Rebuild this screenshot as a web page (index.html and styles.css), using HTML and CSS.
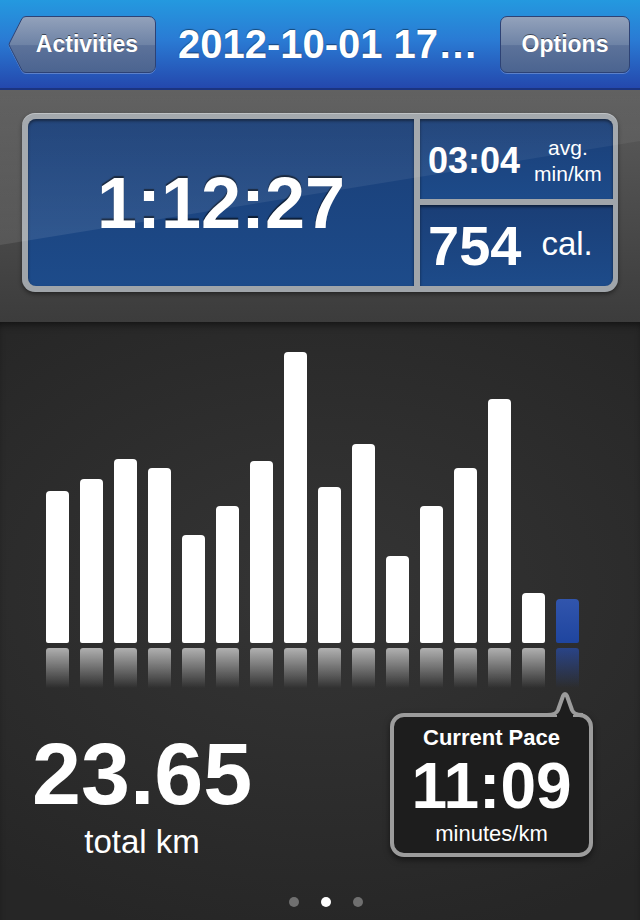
FILE: index.html
```html
<!DOCTYPE html>
<html lang="en">
<head>
    <meta charset="UTF-8">
    <meta name="viewport" content="width=device-width, initial-scale=1.0">
    <title>2012-10-01 17:00 - Activity</title>
    <link rel="stylesheet" href="styles.css">
</head>
<body>
    <header class="navbar">
        <a class="nav-btn back-btn" href="#">
            <svg class="back-shape" width="148" height="57" viewBox="0 0 148 57">
                <defs>
                    <linearGradient id="btnGrad" x1="0" y1="0" x2="0" y2="1">
                        <stop offset="0" stop-color="#93a2bb"/>
                        <stop offset="0.5" stop-color="#6e83a6"/>
                        <stop offset="0.52" stop-color="#5c729a"/>
                        <stop offset="1" stop-color="#4b6490"/>
                    </linearGradient>
                </defs>
                <path d="M18,0.5 H141 A6.5,6.5 0 0 1 147.5,7 V50 A6.5,6.5 0 0 1 141,56.5 H18 Q15.5,56.5 14,54.5 L1.5,30 Q0.8,28.5 1.5,27 L14,2.5 Q15.5,0.5 18,0.5 Z" fill="url(#btnGrad)" stroke="#2d4275" stroke-width="1"/>
            </svg>
            <span class="btn-label">Activities</span>
        </a>
        <h1 class="nav-title">2012-10-01 17…</h1>
        <a class="nav-btn options-btn" href="#">Options</a>
    </header>

    <section class="summary">
        <div class="stats-box">
            <div class="stat stat-time">1:12:27</div>
            <div class="stat stat-pace">
                <span class="pace-value">03:04</span>
                <span class="pace-unit">avg.<br>min/km</span>
            </div>
            <div class="stat stat-cal">
                <span class="cal-value">754</span>
                <span class="cal-unit">cal.</span>
            </div>
        </div>
    </section>

    <main class="splits">
        <div class="chart">
            <div class="bar" style="height: 152px"></div>
            <div class="bar" style="height: 164px"></div>
            <div class="bar" style="height: 184px"></div>
            <div class="bar" style="height: 175px"></div>
            <div class="bar" style="height: 108px"></div>
            <div class="bar" style="height: 137px"></div>
            <div class="bar" style="height: 182px"></div>
            <div class="bar" style="height: 291px"></div>
            <div class="bar" style="height: 156px"></div>
            <div class="bar" style="height: 199px"></div>
            <div class="bar" style="height: 87px"></div>
            <div class="bar" style="height: 137px"></div>
            <div class="bar" style="height: 175px"></div>
            <div class="bar" style="height: 244px"></div>
            <div class="bar" style="height: 50px"></div>
            <div class="bar bar-current" style="height: 44px"></div>
        </div>
        <div class="reflection">
            <span></span><span></span><span></span><span></span>
            <span></span><span></span><span></span><span></span>
            <span></span><span></span><span></span><span></span>
            <span></span><span></span><span></span>
            <span class="current"></span>
        </div>

        <div class="totals">
            <div class="distance">
                <div class="distance-value">23.65</div>
                <div class="distance-label">total km</div>
            </div>
            <div class="pace-bubble">
                <svg class="bubble-tail" width="40" height="30" viewBox="0 0 40 30">
                    <rect x="10" y="24" width="16" height="6" fill="#1d1d1d"/>
                    <path d="M0,25 C7,25 9.5,23.5 11,20 L16,6 Q18,2 20,6 L25,20 C26.5,23.5 29,25 36,25" fill="#1d1d1d" stroke="#9c9c9c" stroke-width="4" stroke-linejoin="round"/>
                </svg>
                <div class="bubble-title">Current Pace</div>
                <div class="bubble-value">11:09</div>
                <div class="bubble-unit">minutes/km</div>
            </div>
        </div>

        <div class="pager">
            <span class="dot"></span>
            <span class="dot active"></span>
            <span class="dot"></span>
        </div>
    </main>
</body>
</html>
```

FILE: styles.css
```css
body {
    margin: 0;
    width: 640px;
    height: 920px;
    overflow: hidden;
    background-color: #2b2b2b;
    color: white;
    font-family: "Liberation Sans", Arial, sans-serif;
}

/* top bar */
.navbar {
    height: 88px;
    border-bottom: 2px solid #1b3480;
    background: linear-gradient(#2499df, #2a7bd4 45%, #2448ad);
    display: flex;
    align-items: center;
    padding: 0 10px 0 8px;
}
.nav-btn {
    color: white;
    text-decoration: none;
    font-size: 23px;
    font-weight: bold;
    text-shadow: 0 -1px 0 rgba(0, 0, 0, 0.5);
    display: flex;
    align-items: center;
    justify-content: center;
    height: 57px;
    box-sizing: border-box;
}
.back-btn {
    position: relative;
    width: 148px;
    padding-left: 10px;
}
.back-shape {
    position: absolute;
    left: 0;
    top: 0;
    filter: drop-shadow(0 1px 0 rgba(255, 255, 255, 0.25));
}
.btn-label {
    position: relative;
}
.options-btn {
    width: 130px;
    border: 1px solid #2d4275;
    border-radius: 7px;
    background: linear-gradient(#93a2bb, #6e83a6 50%, #5c729a 52%, #4b6490);
    box-shadow: 0 1px 0 rgba(255, 255, 255, 0.25);
}
.nav-title {
    flex: 1;
    margin: 0;
    text-align: center;
    font-size: 40px;
    font-weight: bold;
    white-space: nowrap;
    text-shadow: 0 -1px 1px rgba(0, 0, 0, 0.45);
}

/* summary panel */
.summary {
    position: relative;
    height: 232px;
    box-sizing: border-box;
    padding: 23px 0 0 22px;
    background: linear-gradient(#5c5c5c, #3c3c3c);
}
.summary::after {
    content: "";
    position: absolute;
    inset: 0;
    clip-path: polygon(0 0, 100% 0, 100% 51px, 0 155px);
    background: linear-gradient(rgba(255, 255, 255, 0.03), rgba(255, 255, 255, 0.12));
    pointer-events: none;
}
.stats-box {
    width: 596px;
    box-sizing: border-box;
    padding: 6px 5px 6px 6px;
    background: #a0a5aa;
    border-radius: 13px;
    box-shadow: 0 2px 4px rgba(0, 0, 0, 0.45), inset 0 1px 0 rgba(255, 255, 255, 0.3);
    display: grid;
    grid-template-columns: 386px 193px;
    grid-template-rows: 80px 81px;
    gap: 6px;
}
.stat {
    background: linear-gradient(#1a3e76, #1d4b8a);
    box-shadow: inset 0 2px 3px rgba(0, 0, 0, 0.5);
    display: flex;
    align-items: center;
    font-weight: bold;
    line-height: 1;
}
.stat-time {
    grid-row: 1 / 3;
    justify-content: center;
    font-size: 72px;
    border-radius: 8px 0 0 8px;
    text-shadow: 0 -2px 1px rgba(0, 0, 0, 0.6);
}
.stat-pace {
    border-radius: 0 8px 0 0;
    padding: 3px 0 0 8px;
    gap: 14px;
}
.pace-value {
    font-size: 36px;
}
.pace-unit {
    font-size: 21px;
    font-weight: normal;
    line-height: 26px;
    text-align: center;
}
.stat-cal {
    border-radius: 0 0 8px 0;
    padding-left: 8px;
    gap: 20px;
}
.cal-value {
    font-size: 56px;
}
.cal-unit {
    font-size: 33px;
    font-weight: normal;
    margin-top: -4px;
}

/* splits chart */
.splits {
    height: 598px;
    box-sizing: border-box;
    padding-top: 30px;
    background: radial-gradient(ellipse 80% 60% at 50% 45%, #353535, #262626);
    box-shadow: inset 0 6px 8px -4px rgba(0, 0, 0, 0.6);
}
.chart {
    display: flex;
    align-items: flex-end;
    gap: 11px;
    padding-left: 46px;
    height: 291px;
}
.bar {
    width: 23px;
    background: #fff;
    border-radius: 4px 4px 2px 2px;
}
.bar-current {
    background: linear-gradient(#3155ad, #1f459f);
}
.reflection {
    display: flex;
    gap: 11px;
    padding-left: 46px;
    margin-top: 5px;
    height: 40px;
}
.reflection span {
    width: 23px;
    background: linear-gradient(rgba(255, 255, 255, 0.62), rgba(255, 255, 255, 0));
    border-radius: 3px 3px 0 0;
}
.reflection .current {
    background: linear-gradient(rgba(40, 75, 165, 0.75), rgba(40, 75, 165, 0));
}

/* totals */
.totals {
    display: flex;
    justify-content: space-between;
    align-items: flex-start;
    padding: 0 47px 0 32px;
    height: 169px;
}
.distance {
    margin-top: 37px;
    width: 220px;
    text-align: center;
    line-height: 1.12;
}
.distance-value {
    font-size: 88px;
    font-weight: bold;
}
.distance-label {
    font-size: 33px;
}
.pace-bubble {
    position: relative;
    margin-top: 25px;
    width: 203px;
    height: 144px;
    box-sizing: border-box;
    padding-top: 9px;
    border: 4px solid #9c9c9c;
    border-radius: 14px;
    background: #1d1d1d;
    box-shadow: 0 3px 6px rgba(0, 0, 0, 0.5);
    text-align: center;
    line-height: 1.12;
}
.bubble-tail {
    position: absolute;
    left: 153px;
    top: -27px;
}
.bubble-title {
    font-size: 22px;
    font-weight: bold;
}
.bubble-value {
    font-size: 64px;
    font-weight: bold;
}
.bubble-unit {
    font-size: 22px;
}

/* page dots */
.pager {
    display: flex;
    justify-content: center;
    gap: 22px;
    padding-left: 12px;
    margin-top: 40px;
}
.dot {
    width: 10px;
    height: 10px;
    border-radius: 50%;
    background: #707070;
}
.dot.active {
    background: #fff;
}
```
